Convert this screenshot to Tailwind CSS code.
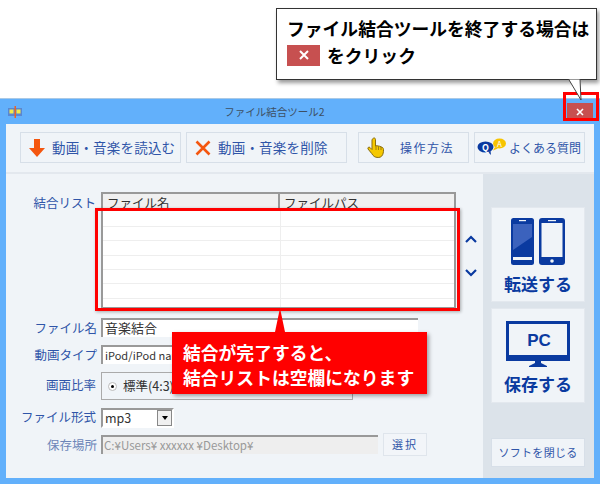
<!DOCTYPE html>
<html lang="ja">
  <head>
    <meta charset="UTF-8" />
    <meta name="viewport" content="width=device-width, initial-scale=1.0" />
    <script src="https://cdn.jsdelivr.net/npm/@tailwindcss/browser@4"></script>
    <title>ファイル結合ツール2</title>
  </head>
  <body class="relative w-[600px] h-[484px] overflow-hidden bg-white font-['Noto_Sans_CJK_JP','Noto_Sans',sans-serif]">
    <!-- window -->
    <div class="mt-[98px] h-[386px] flex flex-col bg-[#62b0fb] border-t border-[#a9c9e6]">
      <div class="h-[25px] shrink-0 flex items-center pl-2 pr-[7px]">
        <svg width="14" height="12" viewBox="0 0 14 12">
          <rect x="0" y="2" width="14" height="8" fill="#5a86d0" />
          <rect x="1.5" y="3.5" width="4" height="4" fill="#f2e84a" />
          <rect x="8.5" y="3.5" width="4" height="4" fill="#f2e84a" />
          <rect x="6.5" y="0" width="1.5" height="12" fill="#e8622a" />
        </svg>
        <div class="flex-1 text-center text-[10.5px] text-[#3d4f63] pr-[40px]">ファイル結合ツール2</div>
        <div class="w-[26px] h-[18px] bg-[#c75050] flex items-center justify-center">
          <svg width="8" height="8" viewBox="0 0 8 8"><path d="M1 1 7 7M7 1 1 7" stroke="#fff" stroke-width="1.6" /></svg>
        </div>
      </div>
      <div class="mx-[6px] h-[354px] bg-[#f0f4f8] flex flex-col">
        <!-- toolbar -->
        <div class="h-[50px] shrink-0 border-b-2 border-[#e3e8ee] pt-2 pl-[14px] flex text-[#2f55a8]">
          <div class="w-[161px] h-[31px] border border-[#d7dfe8] flex items-center pl-2 gap-[7px] text-[13.5px] tracking-[0.2px] whitespace-nowrap">
            <svg width="16" height="18" viewBox="0 0 16 18"><path d="M5 0h6v9h5l-8 9-8-9h5z" fill="#f4560f" /></svg>
            <span>動画・音楽を読込む</span>
          </div>
          <div class="ml-[5px] w-[161px] h-[31px] border border-[#d7dfe8] flex items-center pl-2 gap-[7px] text-[13.5px] tracking-[0.2px] whitespace-nowrap">
            <svg width="16" height="16" viewBox="0 0 16 16"><path d="M1.5 1.5 14.5 14.5M14.5 1.5 1.5 14.5" stroke="#f4560f" stroke-width="2.6" /></svg>
            <span>動画・音楽を削除</span>
          </div>
          <div class="ml-[11px] w-[111px] h-[31px] border border-[#d7dfe8] flex items-center pl-2 text-[12px]">
            <svg width="19" height="22" viewBox="0 0 19 22">
              <path d="M6 1.500c1-1 2.400-.6 2.500 1V9l1-.4 1.500.4 1.500.2 1.500.6 1.700.8c1 1 1 3 .5 5.400-.5 2.500-2 4.500-5 4.500-3.500 0-5-1.500-6.500-4L1 12c-.5-1.500.8-2.500 2-1.500l2 2V3c0-.6.400-1.100 1-1.500z" fill="#f5c800" stroke="#8a6d10" stroke-width="1" />
              <path d="M9 9v4M11.500 9.500v3.500M14 10v3" stroke="#8a6d10" stroke-width=".8" />
            </svg>
            <span class="ml-[14px] tracking-[1.500px]">操作方法</span>
          </div>
          <div class="ml-[5px] w-[111px] h-[31px] border border-[#d7dfe8] flex items-center pl-[2px] text-[12px]">
            <svg width="30" height="20" viewBox="0 0 30 20">
              <ellipse cx="22.500" cy="5.500" rx="6.500" ry="5" fill="#f7c400" />
              <path d="m18 9-2 3.500 5-2z" fill="#f7c400" />
              <text x="22.500" y="9" font-size="8" fill="#fff" text-anchor="middle">A</text>
              <ellipse cx="8.500" cy="9" rx="8" ry="5.500" fill="#0a3aa0" />
              <path d="m11 14 3 3-.5-4z" fill="#0a3aa0" />
              <text x="8.500" y="12.500" font-size="9" font-weight="700" fill="#fff" text-anchor="middle">Q</text>
            </svg>
            <span class="ml-[2px]">よくある質問</span>
          </div>
        </div>
        <div class="flex-1 flex">
          <!-- form -->
          <div class="w-[477px] pt-[18px] pl-[95px] relative text-[#2f55a8] text-[12.5px]">
            <div class="relative w-[355px] h-[117px] border-2 border-[#999] bg-white">
              <div class="absolute right-[358px] top-0 whitespace-nowrap">結合リスト</div>
              <div class="h-[16px] bg-[#f0f0f0] flex text-[12.5px] leading-[17px] text-[#333]">
                <div class="w-[177px] border-r-2 border-[#999] pl-1">ファイル名</div>
                <div class="pl-1">ファイルパス</div>
              </div>
              <div class="flex flex-col">
                <div class="h-[17px] border-b border-[#eeeeee]"></div>
                <div class="h-[14px] border-b border-[#eeeeee]"></div>
                <div class="h-[15px] border-b border-[#eeeeee]"></div>
                <div class="h-[14px] border-b border-[#eeeeee]"></div>
                <div class="h-[14px] border-b border-[#eeeeee]"></div>
                <div class="h-[15px] border-b border-[#eeeeee]"></div>
              </div>
              <div class="absolute left-[177px] top-[16px] bottom-0 w-px bg-[#eeeeee]"></div>
              <div class="absolute left-[362px] top-[39px] flex flex-col gap-[22px]">
                <svg width="12" height="12" viewBox="0 0 12 12"><path d="M1 9 6 4l5 5" fill="none" stroke="#0a3aa0" stroke-width="2.200" /></svg>
                <svg width="12" height="12" viewBox="0 0 12 12"><path d="M1 3l5 5 5-5" fill="none" stroke="#0a3aa0" stroke-width="2.200" /></svg>
              </div>
            </div>
            <div class="mt-[9px] relative w-[317px] h-[19px] border-t-2 border-l-2 border-[#999] bg-white text-[#333] pl-[2px] text-[13px] leading-[15px]">
              音楽結合
              <div class="absolute right-[321px] top-[-1px] text-[12.5px] leading-[17px] text-[#2f55a8] whitespace-nowrap">ファイル名</div>
            </div>
            <div class="mt-[8px] relative w-[317px] h-[19px] border-t-2 border-l-2 border-[#999] bg-white text-[#333] pl-[2px] text-[11px] leading-[17px]">
              iPod/iPod nano
              <div class="absolute right-[321px] top-[-1px] text-[12.5px] text-[#2f55a8] whitespace-nowrap">動画タイプ</div>
            </div>
            <div class="mt-[8px] relative w-[252px] h-[28px] border border-[#aaa] flex items-center pl-[6px] text-[#333]">
              <span class="w-[9px] h-[9px] rounded-full border border-[#bbb] bg-white flex items-center justify-center"><span class="w-[3px] h-[3px] rounded-full bg-black"></span></span>
              <span class="ml-[6px]">標準(4:3)</span>
              <div class="absolute right-[256px] top-[3px] text-[#2f55a8] whitespace-nowrap">画面比率</div>
            </div>
            <div class="mt-[8px] relative w-[73px] h-[20px] border-2 border-[#999] border-r-white border-b-white bg-white flex items-center text-[#333] pl-[2px]">
              <span class="flex-1 text-[12.5px]">mp3</span>
              <span class="w-[15px] h-[16px] bg-[#f0f0f0] border border-[#888] flex items-center justify-center"><span class="border-x-[3px] border-x-transparent border-t-[4px] border-t-black"></span></span>
              <div class="absolute right-[76px] top-[-2px] text-[#2f55a8] whitespace-nowrap">ファイル形式</div>
            </div>
            <div class="mt-[5px] flex items-center gap-[5px]">
              <div class="relative w-[277px] h-[19px] border-t-2 border-l-2 border-[#999] bg-[#eeeeee] text-[#999] pl-[1px] text-[11.5px] leading-[17px]">
                C:¥Users¥ xxxxxx ¥Desktop¥
                <div class="absolute right-[281px] top-[-1px] text-[12.5px] text-[#6d86b8] whitespace-nowrap">保存場所</div>
              </div>
              <div class="w-[44px] h-[23px] bg-[#f2f5f9] border border-[#dfe5ec] flex items-center justify-center text-[11px] tracking-[2px]">選択</div>
            </div>
          </div>
          <!-- sidebar -->
          <div class="flex-1 bg-[#dce3ea] pl-2 pr-2 pt-[33px] flex flex-col text-[#0a3aa0] font-bold">
            <div class="w-[94px] h-[95px] bg-[#f0f4f8] border border-[#e3e8ee] flex flex-col items-center pt-[10px]">
              <svg width="54" height="47" viewBox="0 0 54 47">
                <rect x="0" y="0" width="23" height="47" rx="2.500" fill="#0a3aa0" />
                <rect x="2" y="6" width="19" height="33" fill="#0a3aa0" />
                <path d="M2 6h19v13L2 32z" fill="#3b62bd" />
                <rect x="2" y="39" width="19" height="3" fill="#f0f4f8" />
                <rect x="8" y="2" width="7" height="1.200" fill="#f0f4f8" />
                <rect x="28" y="0" width="26" height="47" rx="3" fill="#0a3aa0" />
                <rect x="30.500" y="5" width="21" height="34" fill="#f0f4f8" />
                <circle cx="41" cy="43" r="1.800" fill="#f0f4f8" />
                <rect x="37" y="2" width="8" height="1.200" fill="#f0f4f8" />
              </svg>
              <div class="mt-[8px] text-[17px] leading-[22px] whitespace-nowrap">転送する</div>
            </div>
            <div class="mt-[6px] w-[94px] h-[95px] bg-[#f0f4f8] border border-[#e3e8ee] flex flex-col items-center pt-[12px]">
              <svg width="64" height="46" viewBox="0 0 64 46">
                <path d="M0 0h64v40H0z" fill="#0a3aa0" />
                <path d="M3 3h58v31H3z" fill="#f0f4f8" />
                <text x="33" y="25" font-size="17" font-weight="700" fill="#0a3aa0" text-anchor="middle" font-family="Liberation Sans">PC</text>
                <path d="M29 40h6v2l6 3v1H23v-1l6-3z" fill="#0a3aa0" />
              </svg>
              <div class="mt-[6px] text-[17px] leading-[22px] whitespace-nowrap">保存する</div>
            </div>
            <div class="mt-[35px] w-[94px] h-[29px] bg-[#f0f4f8] border border-[#d7dfe8] flex items-center justify-center text-[11px] font-normal text-[#2f55a8] tracking-[0.300px] whitespace-nowrap">ソフトを閉じる</div>
          </div>
        </div>
      </div>
    </div>

    <!-- annotations -->
    <div class="absolute left-[563px] top-[92px] w-[36px] h-[29px] border-[3px] border-[#f00]"></div>
    <div class="absolute left-[95px] top-[208px] w-[365px] h-[103px] border-[3px] border-[#f00] shadow-[1px_1px_3px_rgba(0,0,0,.3)]"></div>

    <div class="absolute left-[276px] top-[8px] w-[321px] h-[72px] border border-[#333] bg-white shadow-[2px_3px_4px_rgba(0,0,0,.4)] pl-[10px] pt-[6px] text-[17.8px] font-bold leading-[26px] text-black">
      <div class="whitespace-nowrap">ファイル結合ツールを終了する場合は</div>
      <div class="flex items-center mt-[1px]">
        <span class="w-[33px] h-[21px] bg-[#c75050] flex items-center justify-center">
          <svg width="10" height="10" viewBox="0 0 10 10"><path d="M1 1 9 9M9 1 1 9" stroke="#fff" stroke-width="2" /></svg>
        </span>
        <span class="ml-[7px]">をクリック</span>
      </div>
    </div>
    <svg class="absolute left-[560px] top-[78px]" width="30" height="30" viewBox="0 0 30 30">
      <path d="M9 1.500 21 22 20 1.500z" fill="#fff" />
      <path d="M8.500 1 21 22 20 1" fill="none" stroke="#444" stroke-width="1" />
    </svg>

    <div class="absolute left-[172px] top-[332px] w-[255px] h-[62px] bg-[#f00] shadow-[2px_2px_4px_rgba(0,0,0,.35)] pl-[11px] pt-[8px] text-[17.8px] font-bold leading-[25px] text-white">
      <div>結合が完了すると、</div>
      <div class="whitespace-nowrap">結合リストは空欄になります</div>
      <div class="absolute left-[103px] top-[-24px] border-x-[5px] border-x-transparent border-b-[24px] border-b-[#f00]"></div>
    </div>
  </body>
</html>
